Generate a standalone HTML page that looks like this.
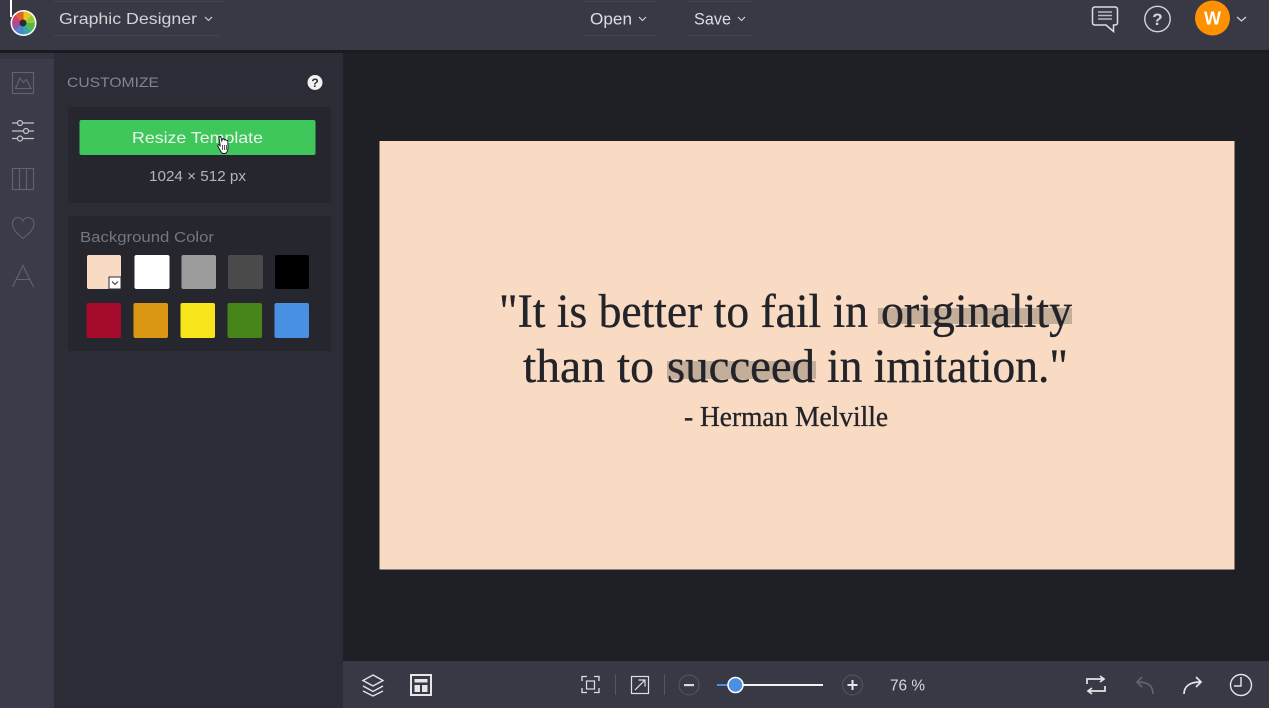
<!DOCTYPE html>
<html><head><meta charset="utf-8">
<style>
html,body{margin:0;padding:0;background:#1f2026;width:1269px;height:708px;overflow:hidden}
svg{display:block}
text{font-family:"Liberation Sans",sans-serif}
.q{font-family:"Liberation Serif",serif;fill:#23232a;stroke:#23232a;stroke-width:.35}
</style></head>
<body>
<svg width="1269" height="708" viewBox="0 0 1269 708" xmlns="http://www.w3.org/2000/svg">
<rect width="1269" height="708" fill="#1f2026"/>
<!-- side -->
<rect x="0" y="50" width="54" height="658" fill="#3a3c49"/>
<rect x="54" y="50" width="289" height="658" fill="#2b2c36"/>
<rect x="0" y="50" width="54" height="9" fill="#33343f"/>
<!-- top bar -->
<rect width="1269" height="50" fill="#383944"/>
<rect y="50" width="1269" height="3" fill="#1a1b20"/>
<!-- logo -->
<path d="M11 0V17" stroke="#fff" stroke-width="2"/>
<circle cx="23.500" cy="23" r="13" fill="#fff"/>
<g>
<path d="M23.500 23L23.500 11.500A11.500 11.500 0 0 1 31.600 14.900Z" fill="#e8c51f"/>
<path d="M23.500 23L31.600 14.900A11.500 11.500 0 0 1 35 23Z" fill="#9bc732"/>
<path d="M23.500 23L35 23A11.500 11.500 0 0 1 31.600 31.100Z" fill="#52b848"/>
<path d="M23.500 23L31.600 31.100A11.500 11.500 0 0 1 23.500 34.500Z" fill="#3aa79c"/>
<path d="M23.500 23L23.500 34.500A11.500 11.500 0 0 1 15.400 31.100Z" fill="#4a86cf"/>
<path d="M23.500 23L15.400 31.100A11.500 11.500 0 0 1 12 23Z" fill="#8a5aa8"/>
<path d="M23.500 23L12 23A11.500 11.500 0 0 1 15.400 14.900Z" fill="#d2416b"/>
<path d="M23.500 23L15.400 14.900A11.500 11.500 0 0 1 23.500 11.500Z" fill="#e2622c"/>
</g>
<circle cx="23" cy="23" r="3.500" fill="#2a2b33"/>
<!-- top dividers -->
<g stroke="#444552" stroke-width="1" fill="none">
<path d="M54 1.500H223M54 35.500H219"/>
<path d="M584 1.500H656M584 35.500H656M687 1.500H753M687 35.500H753"/>
</g>
<text x="59" y="24" font-size="16" fill="#d2d2d7" textLength="138" lengthAdjust="spacingAndGlyphs">Graphic Designer</text>
<path d="M205 17l3.500 3.500 3.500-3.500" stroke="#d6d6da" stroke-width="1.100" fill="none"/>
<text x="590" y="24.500" font-size="16.500" fill="#dcdce0" textLength="42" lengthAdjust="spacingAndGlyphs">Open</text>
<path d="M639 17l3.500 3.500 3.500-3.500" stroke="#d6d6da" stroke-width="1.100" fill="none"/>
<text x="694" y="24.500" font-size="16.500" fill="#dcdce0" textLength="37" lengthAdjust="spacingAndGlyphs">Save</text>
<path d="M738 17l3.500 3.500 3.500-3.500" stroke="#d6d6da" stroke-width="1.100" fill="none"/>
<!-- chat -->
<path d="M1095 7H1115Q1117.500 7 1117.500 9.500V22.500Q1117.500 25 1115 25H1113.500V31.500L1106 25H1095Q1092.500 25 1092.500 22.500V9.500Q1092.500 7 1095 7Z" fill="none" stroke="#dcdcdf" stroke-width="1.500"/>
<path d="M1098 12H1112M1098 15.500H1112M1098 19H1112" stroke="#b9b9be" stroke-width="1.500"/>
<!-- help -->
<circle cx="1157.500" cy="19" r="12.700" fill="none" stroke="#d5d5d8" stroke-width="1.400"/>
<text x="1157.500" y="25" font-size="17" font-weight="bold" text-anchor="middle" fill="#d5d5d8">?</text>
<!-- avatar -->
<circle cx="1212.500" cy="18" r="17.500" fill="#ff9000"/>
<text x="1212.500" y="24.500" font-size="18" font-weight="bold" text-anchor="middle" fill="#fff">W</text>
<path d="M1237 17l4.500 4 4.500-4" stroke="#d6d6da" stroke-width="1.200" fill="none"/>
<!-- sidebar icons -->
<g fill="none" stroke="#62636e" stroke-width="1.100">
<rect x="12.500" y="72.500" width="21" height="21"/>
<path d="M15.500 88.500L20 78L23.500 82.500L26.500 79.500L31 88.500Z"/>
<g stroke="#c4c4ca" stroke-width="1.200">
<path d="M12 123H34M12 131H34M12 138.500H34"/>
<circle cx="20" cy="123" r="2.500" fill="#3a3c49"/>
<circle cx="26" cy="131" r="2.500" fill="#3a3c49"/>
<circle cx="20" cy="138.500" r="2.500" fill="#3a3c49"/>
</g>
<rect x="12.500" y="168.500" width="21" height="21"/>
<path d="M19.500 168.500V189.500M26.500 168.500V189.500"/>
<path d="M23 238.500C18 234 12.500 230 12.500 223.500C12.500 219.500 15.500 217.500 18 217.500C20.500 217.500 22 219 23 221C24 219 25.500 217.500 28 217.500C31 217.500 34 219.500 34 223.500C34 230 28 234 23 238.500Z"/>
<path d="M12.500 287L23 265.500L33.500 287M16.500 279.500H29.500"/>
</g>
<!-- customize panel -->
<text x="67" y="87" font-size="14" fill="#85858e" textLength="92" lengthAdjust="spacingAndGlyphs">CUSTOMIZE</text>
<circle cx="315" cy="82.500" r="7.500" fill="#f0f0f0"/>
<text x="315" y="87" font-size="12" font-weight="bold" text-anchor="middle" fill="#2b2c36">?</text>
<rect x="68" y="107" width="263" height="96" fill="#26272e"/>
<rect x="68" y="216" width="263" height="135" fill="#26272e"/>
<rect x="79.500" y="120" width="236" height="35" rx="2" fill="#40c75c"/>
<text x="197.500" y="143" font-size="16" fill="#e8f7ec" text-anchor="middle" textLength="131" lengthAdjust="spacingAndGlyphs">Resize Template</text>
<!-- hand cursor -->
<path d="M219 137.500C218.500 136 220.500 136 221 137.500L221.800 141L222.500 139C223 138 224 138.500 224 139.500L224.500 140C225 139.300 226 139.600 226.200 140.400C226.800 140 227.700 140.300 227.800 141.200L228 147C228 150 227 152.500 225.500 153.500H222.500C221 152 219.500 149.500 217.800 146C217.400 145 218.500 144.200 219.500 145.200L220.300 146.300Z" fill="#fff" stroke="#111" stroke-width="0.900"/>
<path d="M222.500 145V150M224.500 145V150M226.300 145V150" stroke="#111" stroke-width="0.700"/>
<text x="197.500" y="181" font-size="15" fill="#b5b5ba" text-anchor="middle" textLength="97" lengthAdjust="spacingAndGlyphs">1024 × 512 px</text>
<text x="80" y="242" font-size="15" fill="#76767f" textLength="134" lengthAdjust="spacingAndGlyphs">Background Color</text>
<!-- swatches -->
<rect x="87" y="255" width="34" height="34" rx="2" fill="#f8dbc2"/>
<rect x="134.500" y="255" width="35" height="34" rx="2" fill="#fff"/>
<rect x="181.500" y="255" width="34.500" height="34" rx="2" fill="#9b9b9b"/>
<rect x="228" y="255" width="35" height="34" rx="2" fill="#4a4a4a"/>
<rect x="275" y="255" width="34" height="34" rx="2" fill="#000"/>
<rect x="109" y="277" width="12" height="12" fill="#fff" stroke="#2b2c36" stroke-width="1"/>
<path d="M112 281.500l3 3 3-3" stroke="#555" stroke-width="1.300" fill="none"/>
<rect x="86.500" y="303" width="34.500" height="35" rx="2" fill="#a50b2c"/>
<rect x="133.500" y="303" width="34.500" height="35" rx="2" fill="#da9713"/>
<rect x="180.500" y="303" width="34.500" height="35" rx="2" fill="#f9e51b"/>
<rect x="227.500" y="303" width="34.500" height="35" rx="2" fill="#478419"/>
<rect x="274.500" y="303" width="34.500" height="35" rx="2" fill="#4a90e2"/>
<!-- canvas -->
<rect x="379.500" y="141" width="855" height="428.500" fill="#f8dbc2"/>
<rect x="878" y="308" width="194" height="16" fill="#c4ae99"/>
<rect x="667" y="361" width="149" height="18" fill="#c4ae99"/>
<text class="q" x="499" y="327" font-size="48" textLength="369" lengthAdjust="spacingAndGlyphs">"It is better to fail in</text>
<text class="q" x="881" y="327" font-size="48" textLength="191" lengthAdjust="spacingAndGlyphs">originality</text>
<text class="q" x="523" y="382" font-size="48" textLength="131" lengthAdjust="spacingAndGlyphs">than to</text>
<text class="q" x="667" y="382" font-size="48" textLength="148" lengthAdjust="spacingAndGlyphs">succeed</text>
<text class="q" x="827" y="382" font-size="48" textLength="241" lengthAdjust="spacingAndGlyphs">in imitation."</text>
<text class="q" x="684" y="426" font-size="29" textLength="204" lengthAdjust="spacingAndGlyphs">- Herman Melville</text>
<!-- bottom bar -->
<rect x="343" y="661" width="926" height="47" fill="#383944"/>
<g fill="none" stroke="#e6e6e8" stroke-width="1.400">
<path d="M373 675L383 680.500L373 686L363 680.500Z"/>
<path d="M363 686L373 691.500L383 686M363 691L373 696L383 691"/>
<rect x="411" y="675" width="20" height="20" stroke-width="2"/>
</g>
<rect x="414.500" y="679" width="13" height="3.500" fill="#e6e6e8"/>
<rect x="414.500" y="685" width="5.500" height="7" fill="#e6e6e8"/>
<rect x="422" y="685" width="5.500" height="7" fill="#e6e6e8"/>
<g fill="none" stroke="#e0e0e3" stroke-width="1.200">
<path d="M582 681V676.500H587M594 676.500H599V681M599 688V692.500H594M587 692.500H582V688" stroke-width="1.300"/>
<rect x="586.500" y="681" width="8" height="8"/>
<rect x="631.500" y="676.500" width="17" height="17"/>
<path d="M635 690L645 680M638.500 680H645V686.500"/>
</g>
<path d="M615.500 674V695M664.500 674V695" stroke="#55565f" stroke-width="1"/>
<circle cx="689" cy="685" r="10" fill="none" stroke="#55565f"/>
<rect x="684" y="684" width="10" height="2.200" fill="#d8d8dc"/>
<circle cx="852.500" cy="685" r="10" fill="none" stroke="#55565f"/>
<path d="M847.500 685H857.500M852.500 680V690" stroke="#e6e6e8" stroke-width="2"/>
<rect x="717" y="684" width="12" height="2" fill="#4a90e2"/>
<rect x="735" y="684" width="88" height="2" fill="#f2f2f2"/>
<circle cx="735.500" cy="685" r="7.500" fill="#4a90e2" stroke="#fff" stroke-width="1.500"/>
<text x="890" y="690.500" font-size="16" fill="#d8d8dc" textLength="35" lengthAdjust="spacingAndGlyphs">76 %</text>
<g fill="none" stroke="#e6e6e8" stroke-width="1.700">
<path d="M1087 684V679H1104M1100 676L1104 679L1100 682"/>
<path d="M1105 686V691H1088M1092 688L1088 691L1092 694"/>
<path d="M1153 694C1153 687 1149 682 1138 682M1142 677L1137 682L1142 687" stroke="#62636c"/>
<path d="M1184 694C1184 687 1189 682 1200 682M1196 677L1201 682L1196 687"/>
<circle cx="1241" cy="685" r="10.500" stroke-width="1.400"/>
<path d="M1241 677V686H1234" stroke-width="1.400"/>
</g>
</svg>
</body></html>
